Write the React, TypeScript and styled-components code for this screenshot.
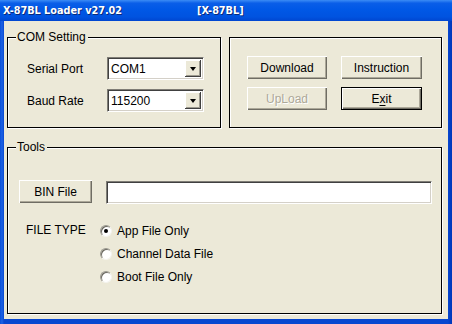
import React from 'react'
import { styled, createGlobalStyle } from 'styled-components'

const GlobalStyle = createGlobalStyle`
  html, body {
    margin: 0;
    padding: 0;
    background: #0047d8;
  }
  body {
    font-family: "Liberation Sans", Arial, sans-serif;
    font-size: 12px;
    color: #000;
  }
`

const App = () => {
  return (
    <>
      <GlobalStyle />
      <Window>
        <TitleBar>
          <ProgramName>X-87BL Loader v27.02</ProgramName>
          <span>[X-87BL]</span>
        </TitleBar>
        <Client>
          <TopRow>
            <ComGroup>
              <Caption>COM Setting</Caption>
              <FieldRow>
                <FieldLabel>Serial Port</FieldLabel>
                <Combo>
                  <ComboText>COM1</ComboText>
                  <DropButton><Arrow /></DropButton>
                </Combo>
              </FieldRow>
              <FieldRow>
                <FieldLabel>Baud Rate</FieldLabel>
                <Combo>
                  <ComboText>115200</ComboText>
                  <DropButton><Arrow /></DropButton>
                </Combo>
              </FieldRow>
            </ComGroup>
            <ActionGroup>
              <ButtonGrid>
                <PushButton>Download</PushButton>
                <PushButton>Instruction</PushButton>
                <PushButton disabled>UpLoad</PushButton>
                <PushButton $default>
                  E<u>x</u>it
                </PushButton>
              </ButtonGrid>
            </ActionGroup>
          </TopRow>
          <ToolsGroup>
            <Caption>Tools</Caption>
            <BinRow>
              <BinButton>BIN File</BinButton>
              <PathField />
            </BinRow>
            <TypeRow>
              <TypeLabel>FILE TYPE</TypeLabel>
              <RadioList>
                <RadioRow>
                  <RadioDot $checked />
                  <span>App File Only</span>
                </RadioRow>
                <RadioRow>
                  <RadioDot />
                  <span>Channel Data File</span>
                </RadioRow>
                <RadioRow>
                  <RadioDot />
                  <span>Boot File Only</span>
                </RadioRow>
              </RadioList>
            </TypeRow>
          </ToolsGroup>
        </Client>
      </Window>
    </>
  )
}

const Window = styled.div`
  width: 452px;
  height: 324px;
  display: flex;
  flex-direction: column;
  background: linear-gradient(to right, #0a4fd8 0px, #1c62e6 2px, #0847d0 4px, #0847d0 448px, #0036b8 452px);
  overflow: hidden;
`

const TitleBar = styled.div`
  height: 21px;
  flex: none;
  display: flex;
  align-items: center;
  padding: 0 0 1px 3px;
  box-sizing: border-box;
  background: linear-gradient(to bottom, #3b8cf5 0%, #0a5ee8 15%, #0058e6 45%, #0053e0 80%, #0046d0 100%);
  font-family: "DejaVu Sans", Verdana, sans-serif;
  font-size: 9.7px;
  font-weight: bold;
  color: #fff;
  text-shadow: 1px 1px 0 #0a2a7a;
  white-space: nowrap;
`

const ProgramName = styled.span`
  width: 194px;
`

const Client = styled.div`
  flex: 1;
  margin: 0 4px 5px 4px;
  background: #ece9d8;
  padding: 16px 6px 0 3px;
  display: flex;
  flex-direction: column;
`

const TopRow = styled.div`
  display: flex;
  gap: 8px;
`

const Group = styled.div`
  position: relative;
  border: 1px solid #000;
  box-shadow: 1px 1px 0 #fff, inset 1px 1px 0 #fff;
  box-sizing: border-box;
`

const Caption = styled.span`
  position: absolute;
  top: -8px;
  left: 8px;
  padding: 0 2px 0 1px;
  background: #ece9d8;
  line-height: 15px;
`

const ComGroup = styled(Group)`
  width: 214px;
  height: 91px;
  padding: 19px 0 0 19px;
  display: flex;
  flex-direction: column;
  gap: 9px;
`

const ActionGroup = styled(Group)`
  width: 213px;
  height: 91px;
  padding: 18px 0 0 17px;
`

const FieldRow = styled.div`
  display: flex;
  align-items: center;
  height: 23px;
`

const FieldLabel = styled.span`
  width: 80px;
`

const Sunken = styled.div`
  box-sizing: border-box;
  background: #fff;
  border: 1px solid;
  border-color: #7f7d76 #fff #fff #7f7d76;
  box-shadow: inset 1px 1px 0 #404040, inset -1px -1px 0 #d4d0c8;
`

const Combo = styled(Sunken)`
  width: 97px;
  height: 23px;
  display: flex;
  align-items: stretch;
  padding: 2px;
`

const ComboText = styled.span`
  flex: 1;
  display: flex;
  align-items: center;
  padding-left: 1px;
`

const DropButton = styled.div`
  width: 16px;
  background: #ece9d8;
  display: flex;
  align-items: center;
  justify-content: center;
  box-shadow: inset -1px -1px 0 #404040, inset 1px 1px 0 #fff, inset -2px -2px 0 #9d9b90;
`

const Arrow = styled.div`
  width: 0;
  height: 0;
  border-left: 3.5px solid transparent;
  border-right: 3.5px solid transparent;
  border-top: 4px solid #000;
  margin-top: 1px;
`

const ButtonGrid = styled.div`
  display: grid;
  grid-template-columns: 80px 81px;
  grid-auto-rows: 23px;
  column-gap: 14px;
  row-gap: 8px;
`

const PushButton = styled.button<{ $default?: boolean }>`
  font-family: "Liberation Sans", Arial, sans-serif;
  font-size: 12px;
  color: #000;
  background: #ece9d8;
  padding: 0;
  margin: 0;
  border: ${(p) => (p.$default ? '1px solid #000' : 'none')};
  box-shadow: inset 1px 1px 0 #fff, inset -1px -1px 0 #6f6d64, inset -2px -2px 0 #aca899;
  &:disabled {
    color: #aca899;
    text-shadow: 1px 1px 0 #fff;
  }
  u {
    text-decoration-thickness: 1px;
    text-underline-offset: 2px;
  }
`

const ToolsGroup = styled(Group)`
  margin-top: 19px;
  height: 167px;
  padding: 32px 0 0 11px;
`

const BinRow = styled.div`
  display: flex;
  align-items: flex-start;
`

const BinButton = styled(PushButton)`
  width: 73px;
  height: 23px;
`

const PathField = styled(Sunken)`
  margin: 1px 0 0 14px;
  width: 326px;
  height: 23px;
`

const TypeRow = styled.div`
  display: flex;
  margin: 18px 0 0 7px;
`

const TypeLabel = styled.span`
  width: 74px;
  line-height: 17px;
`

const RadioList = styled.div`
  display: flex;
  flex-direction: column;
  gap: 6px;
`

const RadioRow = styled.div`
  display: flex;
  align-items: center;
  height: 17px;
  gap: 5px;
`

const RadioDot = styled.span<{ $checked?: boolean }>`
  width: 12px;
  height: 12px;
  box-sizing: border-box;
  border-radius: 50%;
  background: #fff;
  border: 1px solid;
  border-color: #9a988e #f4f3ee #f4f3ee #9a988e;
  box-shadow: inset 1px 1px 0 #6a685f;
  position: relative;
  &::after {
    content: '';
    display: ${(p) => (p.$checked ? 'block' : 'none')};
    position: absolute;
    left: 3px;
    top: 3px;
    width: 4px;
    height: 4px;
    border-radius: 50%;
    background: #000;
  }
`

export default App
